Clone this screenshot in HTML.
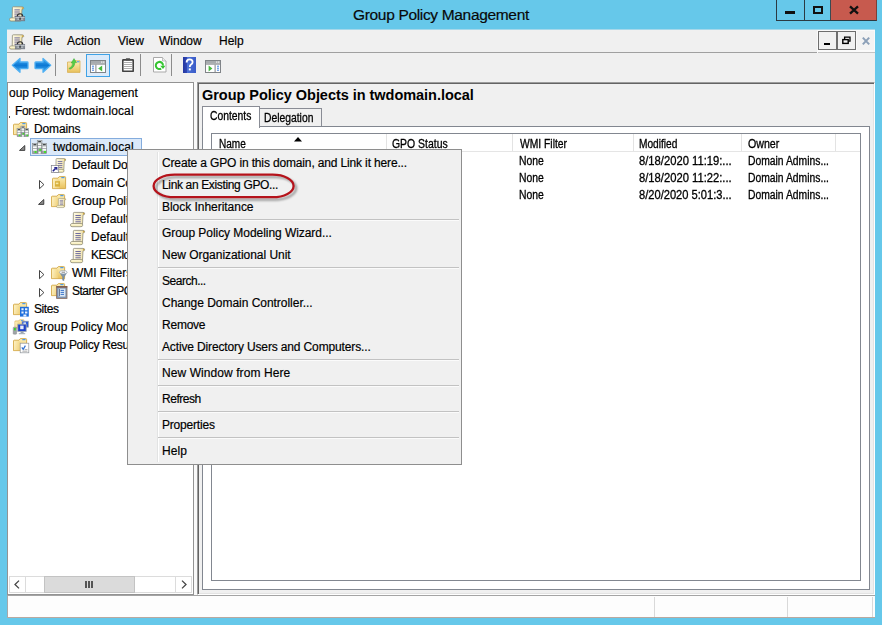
<!DOCTYPE html>
<html>
<head>
<meta charset="utf-8">
<title>Group Policy Management</title>
<style>
*{box-sizing:border-box;margin:0;padding:0}
html,body{width:882px;height:625px;overflow:hidden}
body{position:relative;background:#66c8ea;font-family:"Liberation Sans",sans-serif;font-size:12px;color:#000}
.abs{position:absolute}
.t{position:absolute;white-space:pre;line-height:1;-webkit-text-stroke:.18px #000}
svg{position:absolute;display:block;overflow:visible}
/* title */
#title{left:353px;top:6.5px;font-size:15.5px;letter-spacing:-0.33px;color:#0a0a0a}
/* caption buttons */
#cap{left:776px;top:0;width:101px;height:21px;background:#66c8ea;border-left:1px solid #2b3a42;border-bottom:1px solid #2b3a42;border-right:1px solid #7a4038}
#capclose{left:830px;top:0;width:46px;height:20px;background:#c75a4e}
/* client */
#client{left:7px;top:30px;width:868px;height:588px;background:#f0f0f0}
#menuline{left:7px;top:52px;width:810px;height:1px;background:#a0a0a0}
.menu{font-size:12px;top:35px}
/* tree */
#tree{left:7px;top:82px;width:187px;height:513px;background:#fff;border:1px solid #939393}
.tr{font-size:12px}
#sel{left:30px;top:138px;width:112px;height:18px;background:#dbe9f9;border:1px solid #84acdd}
/* right pane */
#rp{left:197px;top:82px;width:678px;height:513px;border:1px solid #fff;border-top-color:#9c9c9c;border-left-color:#9c9c9c;box-shadow:inset 1px 1px 0 #646464,inset -1px -1px 0 #e3e3e3;background:#f0f0f0}
#h1{left:202px;top:88px;font-size:14.5px;font-weight:bold;letter-spacing:-0.035px;-webkit-text-stroke:0}
#tabpage{left:202px;top:126px;width:668px;height:464px;background:#fff;border:1px solid #828790}
#tab1{left:202px;top:106px;width:58px;height:22px;background:#fff;border:1px solid #898c95;border-bottom:none}
#tab2{left:259px;top:108px;width:63px;height:18px;background:#f0f0f0;border:1px solid #898c95;border-bottom:none}
#lv{left:211px;top:133px;width:650px;height:448px;background:#fff;border:1px solid #828790}
.hd{font-size:12px;top:138px;-webkit-text-stroke:.3px #000}
.cell{font-size:12px;-webkit-text-stroke:.3px #000}
.hsep{top:134px;width:1px;height:17px;background:#e3e3e3}
/* status */
#status{left:7px;top:595px;width:868px;height:23px;background:#fdfdfd}

.tsep{top:54px;width:1px;height:22px;background:#8c8c8c}
/* context menu */
#cm{left:127px;top:149px;width:335px;height:316px;background:#f0f0f0;border:1px solid #8e8e8e}
.mi{font-size:12px;left:162px}
.ms{left:158px;width:301px;height:1px;background:#c2c2c2;box-shadow:0 1px 0 #fbfbfb}
</style>
</head>
<body>

<svg width="0" height="0" style="left:0;top:0">
<defs>
<linearGradient id="fg" x1="0" y1="0" x2="0" y2="1"><stop offset="0" stop-color="#fdf0b8"/><stop offset="1" stop-color="#e9c15c"/></linearGradient>
<linearGradient id="fg2" x1="0" y1="0" x2="1" y2="0"><stop offset="0" stop-color="#fff6cf"/><stop offset="1" stop-color="#f1d37d"/></linearGradient>
<linearGradient id="ag" x1="0" y1="0" x2="0" y2="1"><stop offset="0" stop-color="#49acf0"/><stop offset=".5" stop-color="#0c78d4"/><stop offset="1" stop-color="#4fb2f3"/></linearGradient>
<linearGradient id="sg" x1="0" y1="0" x2="1" y2="0"><stop offset="0" stop-color="#fffbe6"/><stop offset="1" stop-color="#f0e2a8"/></linearGradient>
<linearGradient id="hg" x1="0" y1="0" x2="1" y2="0"><stop offset="0" stop-color="#2536a0"/><stop offset=".3" stop-color="#2f47b4"/><stop offset=".32" stop-color="#4a6fd6"/><stop offset="1" stop-color="#3b5cc8"/></linearGradient>
<!-- folder 14x13 -->
<symbol id="folder" viewBox="0 0 16 16" overflow="visible">
 <path d="M0.5 3 Q0.5 2.2 1.3 2.2 H6 L7.3 0.6 H12.8 Q13.6 0.6 13.6 1.4 V12.6 H0.5 Z" fill="url(#fg)" stroke="#d3a744" stroke-width=".9"/>
 <path d="M0.9 3.4 H7.2 V12.2 H0.9 Z" fill="url(#fg2)" opacity=".75"/>
 <rect x="9.3" y="1.1" width="3.2" height="1.1" fill="#3d93ee"/>
</symbol>
<!-- scroll (GPO) 15x15 -->
<symbol id="scroll" viewBox="0 0 16 16" overflow="visible">
 <path d="M3.4 1.2 Q3.4 0.4 4.2 0.4 H13 Q14.9 0.4 14.7 2 Q14.5 3 13 2.8 L12.5 12 H3.2 Z" fill="url(#sg)" stroke="#8e8a76" stroke-width=".8"/>
 <path d="M12.8 0.8 Q14.6 0.6 14.3 2.1 Q13.7 2.7 12.9 2.4Z" fill="#d2a83f"/>
 <path d="M0.5 13.1 Q0.5 11.6 2 11.6 H11.6 Q12.9 11.8 12.7 13.3 Q12.5 14.7 11 14.7 H2 Q0.5 14.7 0.5 13.1Z" fill="#f7edb8" stroke="#8e8a76" stroke-width=".8"/>
 <path d="M1.2 12.7 H10.6" stroke="#fffbe0" stroke-width=".9"/>
 <path d="M5.4 3.5H10.8M5.4 5.6H10.8M5.4 7.7H10.8M5.4 9.8H10.8" stroke="#67639c" stroke-width=".95"/>
</symbol>
<!-- single server w=5 h variable drawn manually -->
<symbol id="servers" viewBox="0 0 16 16" overflow="visible">
 <g>
 <rect x="5.4" y="0.3" width="5.2" height="14.4" fill="#9da3a6" stroke="#70777a" stroke-width=".5"/>
 <rect x="5.7" y="0.6" width="4.6" height="2.4" fill="#c3c7c9"/>
 <rect x="6.5" y="1.2" width="3" height="1.1" fill="#2f3437"/>
 <rect x="6.0" y="3.5999999999999996" width="4" height="1.9" fill="#fafbfb"/>
 <rect x="6.0" y="6.3999999999999995" width="4" height="1.9" fill="#fafbfb"/>
 <rect x="7.7" y="9.7" width="2.1" height="2.1" fill="#3fe224"/>
 <rect x="0.3" y="3.6" width="5.2" height="11.1" fill="#9da3a6" stroke="#70777a" stroke-width=".5"/>
 <rect x="0.6" y="3.9" width="4.6" height="2.4" fill="#c3c7c9"/>
 <rect x="1.4000000000000001" y="4.5" width="3" height="1.1" fill="#2f3437"/>
 <rect x="0.8999999999999999" y="6.9" width="4" height="1.9" fill="#fafbfb"/>
 <rect x="0.8999999999999999" y="9.7" width="4" height="1.9" fill="#fafbfb"/>
 <rect x="2.6" y="11.9" width="2.1" height="2.1" fill="#3fe224"/>
 <rect x="10.5" y="3.6" width="5.2" height="11.1" fill="#9da3a6" stroke="#70777a" stroke-width=".5"/>
 <rect x="10.8" y="3.9" width="4.6" height="2.4" fill="#c3c7c9"/>
 <rect x="11.6" y="4.5" width="3" height="1.1" fill="#2f3437"/>
 <rect x="11.1" y="6.9" width="4" height="1.9" fill="#fafbfb"/>
 <rect x="11.1" y="9.7" width="4" height="1.9" fill="#fafbfb"/>
 <rect x="12.8" y="11.9" width="2.1" height="2.1" fill="#3fe224"/>
 <rect x="6.8" y="12.6" width="2.4" height="2.1" fill="#fafbfb"/>
 </g>
</symbol>
<symbol id="exp" viewBox="0 0 8 8" overflow="visible"><path d="M0.5 6.5 H6.5 V0.5 Z" fill="#595959" stroke="#262626" stroke-width=".6"/></symbol>
<symbol id="col" viewBox="0 0 8 10" overflow="visible"><path d="M0.6 0.8 V9.2 L5 5 Z" fill="#fff" stroke="#303030" stroke-width=".9"/></symbol>
</defs>
</svg>
<!-- title bar -->
<div class="t" id="title">Group Policy Management</div>
<div class="abs" id="cap"></div>
<div class="abs" id="capclose"></div>

<div class="abs" style="left:7px;top:29px;width:868px;height:1px;background:#a6d8ea"></div><div class="abs" id="client"></div>
<div class="abs" id="menuline"></div>
<!-- caption glyphs -->
<div class="abs" style="left:804px;top:0;width:1px;height:20px;background:#2b3a42"></div>
<div class="abs" style="left:830px;top:0;width:1px;height:20px;background:#3a4a52"></div>
<div class="abs" style="left:785px;top:11px;width:10px;height:3px;background:#111"></div>
<div class="abs" style="left:813px;top:6px;width:10px;height:8px;border:2px solid #111"></div>
<svg style="left:849px;top:6px" width="10" height="8" viewBox="0 0 10 8"><path d="M1 0.4 L9 7.6 M9 0.4 L1 7.6" stroke="#111" stroke-width="2.3"/></svg>
<!-- mdi buttons -->
<div class="abs" style="left:817px;top:30px;width:58px;height:23px;background:#fafafa"></div>
<div class="abs" style="left:818px;top:52px;width:57px;height:1px;background:#c4c4c4"></div>
<div class="abs" style="left:818px;top:31px;width:19px;height:19px;background:#f1f1f1;border:1px solid #6e6e6e"></div>
<div class="abs" style="left:837px;top:31px;width:19px;height:19px;background:#f1f1f1;border:1px solid #6e6e6e"></div>
<div class="abs" style="left:857px;top:31px;width:17px;height:19px;background:#f3f3f3"></div>
<div class="abs" style="left:824px;top:43px;width:6px;height:2px;background:#000"></div>
<svg style="left:842px;top:36px" width="9" height="9" viewBox="0 0 9 9"><path d="M2.6 3 V1.2 H8 V5.2 H6.4" fill="none" stroke="#000" stroke-width="1.3"/><rect x="0.8" y="3.6" width="5.4" height="3.8" fill="none" stroke="#000" stroke-width="1.4"/></svg>
<svg style="left:862px;top:37px" width="8" height="8" viewBox="0 0 8 8"><path d="M0.8 0.6 L7.2 7.4 M7.2 0.6 L0.8 7.4" stroke="#8ca0b8" stroke-width="2"/></svg>

<div class="t menu" id="m1" style="left:33px">File</div>
<div class="t menu" id="m2" style="left:67px">Action</div>
<div class="t menu" id="m3" style="left:118px">View</div>
<div class="t menu" id="m4" style="left:159px">Window</div>
<div class="t menu" id="m5" style="left:219px">Help</div>


<!-- title + menu icon -->
<svg style="left:9px;top:6px" width="16" height="16" viewBox="0 0 16 16"><use href="#scroll" x="0" y="0.4" width="16" height="16"/><path d="M8.2 10.6 Q8.4 7.8 11 7.8 Q13.6 7.8 13.8 10.6" fill="none" stroke="#2e2e2e" stroke-width="1.1"/><rect x="6.2" y="10.7" width="9.6" height="4.2" fill="#8b9299" stroke="#656b78" stroke-width=".5"/><rect x="6.4" y="11.1" width="9.2" height=".9" fill="#c4c9ce"/><rect x="10.5" y="11.6" width="1.1" height="2" fill="#1e1e1e"/><rect x="8.4" y="12.6" width="1.6" height="1.2" fill="#c4c9ce"/><rect x="12.2" y="12.6" width="1.6" height="1.2" fill="#c4c9ce"/></svg>
<svg style="left:9px;top:34px" width="16" height="16" viewBox="0 0 16 16"><use href="#scroll" x="0" y="0.4" width="16" height="16"/><path d="M8.2 10.6 Q8.4 7.8 11 7.8 Q13.6 7.8 13.8 10.6" fill="none" stroke="#2e2e2e" stroke-width="1.1"/><rect x="6.2" y="10.7" width="9.6" height="4.2" fill="#8b9299" stroke="#656b78" stroke-width=".5"/><rect x="6.4" y="11.1" width="9.2" height=".9" fill="#c4c9ce"/><rect x="10.5" y="11.6" width="1.1" height="2" fill="#1e1e1e"/><rect x="8.4" y="12.6" width="1.6" height="1.2" fill="#c4c9ce"/><rect x="12.2" y="12.6" width="1.6" height="1.2" fill="#c4c9ce"/></svg>

<!-- toolbar -->
<svg style="left:12px;top:58px" width="17" height="15" viewBox="0 0 17 15"><path d="M0.3 7.3 L8 0.4 V4 H15.2 Q16 4 16 4.8 V9.9 Q16 10.7 15.2 10.7 H8 V14.3 Z" fill="url(#ag)" stroke="#4fb0f3" stroke-width="1.3" stroke-linejoin="round"/></svg>
<svg style="left:34px;top:58px" width="17" height="15" viewBox="0 0 17 15"><path d="M16.7 7.3 L9 0.4 V4 H1.8 Q1 4 1 4.8 V9.9 Q1 10.7 1.8 10.7 H9 V14.3 Z" fill="url(#ag)" stroke="#4fb0f3" stroke-width="1.3" stroke-linejoin="round"/></svg>
<div class="abs tsep" style="left:55px"></div>
<svg style="left:67px;top:58px" width="15" height="15" viewBox="0 0 15 15"><path d="M0.5 4 H5.5 L6.8 2.8 H13 V14.4 H0.5 Z" fill="url(#fg)" stroke="#d8b055" stroke-width=".8"/><rect x="10" y="3.3" width="2.4" height="1" fill="#3d93ee"/><path d="M2 10.4 Q5.4 9.2 5.8 5 L4.2 5 L7 0.6 L9.6 4.6 L7.8 4.7 Q7.6 9.6 2.8 11.2 Z" fill="#56cf45" stroke="#3aa936" stroke-width=".5"/></svg>
<div class="abs" id="tsel" style="left:86px;top:54px;width:24px;height:23px;background:#dbeafa;border:1px solid #3fa2e6"></div>
<svg style="left:90px;top:60px" width="16" height="13" viewBox="0 0 16 13"><rect x="0.5" y="0.5" width="15" height="12" fill="#fff" stroke="#808488"/><rect x="1" y="1" width="14" height="2.6" fill="#a7abae"/><rect x="1" y="3.6" width="14" height="1" fill="#808488"/><rect x="11" y="1.4" width="1.4" height="1.4" fill="#e8e8e8"/><rect x="13" y="1.4" width="1.4" height="1.4" fill="#e8e8e8"/><rect x="5.4" y="4.6" width="1" height="7.6" fill="#808488"/><path d="M2 6.2H4M2 8.2H4M2 10.2H4" stroke="#3f7ede" stroke-width="1"/><path d="M12.2 5.6 V11.4 L8.2 8.5 Z" fill="#46b83c"/></svg>
<svg style="left:122px;top:58px" width="12" height="14" viewBox="0 0 12 14"><rect x="0.8" y="1.9" width="10.4" height="11.4" rx=".4" fill="#fff" stroke="#434343" stroke-width="1.6"/><rect x="3.8" y="0.3" width="4.4" height="2.2" rx=".6" fill="#4d4d4d"/><path d="M2.4 4.5H9.6M2.4 6.5H9.6M2.4 8.5H9.6M2.4 10.5H9.6" stroke="#9a9a9a" stroke-width=".8" shape-rendering="crispEdges"/></svg>
<div class="abs tsep" style="left:140px"></div>
<svg style="left:153px;top:57px" width="14" height="16" viewBox="0 0 14 16"><path d="M0.5 0.5 H9.5 L13 4 V15 H0.5 Z" fill="#fff" stroke="#a9a9a9"/><path d="M9.5 0.5 V4 H13" fill="#ececec" stroke="#a9a9a9" stroke-width=".7"/><path d="M10 8.6 A3.6 3.6 0 1 0 8.2 11.6" fill="none" stroke="#35c431" stroke-width="2"/><path d="M7.2 8.8 H12.4 L10 12 Z" fill="#35c431"/></svg>
<div class="abs tsep" style="left:171px"></div>
<svg style="left:183px;top:57px" width="13" height="16" viewBox="0 0 13 16"><rect x="0" y="0" width="13" height="16" fill="url(#hg)"/><path d="M3.6 5.4 Q3.6 2.4 6.6 2.4 Q9.6 2.4 9.6 5 Q9.6 6.6 8 7.6 Q6.8 8.4 6.8 10" fill="none" stroke="#fff" stroke-width="1.8"/><rect x="5.8" y="11.4" width="2" height="2" fill="#fff"/></svg>
<svg style="left:205px;top:60px" width="16" height="13" viewBox="0 0 16 13"><rect x="0.5" y="0.5" width="15" height="12" fill="#fff" stroke="#808488"/><rect x="1" y="1" width="14" height="2.6" fill="#a7abae"/><rect x="1" y="3.6" width="14" height="1" fill="#808488"/><rect x="11" y="1.4" width="1.4" height="1.4" fill="#e8e8e8"/><rect x="13" y="1.4" width="1.4" height="1.4" fill="#e8e8e8"/><rect x="9.6" y="4.6" width="1" height="7.6" fill="#808488"/><path d="M12 6.2H14M12 8.2H14M12 10.2H14" stroke="#3f7ede" stroke-width="1"/><path d="M3.6 5.6 V11.4 L7.4 8.5 Z" fill="#46b83c"/></svg>

<div class="abs" id="tree"></div>
<div class="abs" id="sel"></div>



<!-- tree icons -->
<svg style="left:13px;top:122px" width="16" height="16" viewBox="0 0 16 16"><use href="#folder" x="0" y="0" width="16" height="16"/><g transform="translate(3.8,3.8) scale(.76,.74)"><use href="#servers" width="16" height="16"/></g></svg>
<svg style="left:19px;top:145px" width="7" height="7" viewBox="0 0 7 7"><path d="M0.5 5.4 H5.8 V0.5 Z" fill="#8c8c8c" stroke="#262626" stroke-width=".8"/></svg>
<svg style="left:32px;top:140px" width="15" height="15"><use href="#servers" width="15.2" height="14.8"/></svg>
<svg style="left:51px;top:158px" width="16" height="16" viewBox="0 0 16 16"><g transform="translate(2.2,0.2) scale(.85,.96)"><use href="#scroll" width="16" height="16"/></g><rect x="0.3" y="7.6" width="7.4" height="6.9" fill="#fff" stroke="#7d7d86" stroke-width=".7"/><path d="M1.8 13.2 L4.6 10.4" stroke="#25258e" stroke-width="1.6"/><path d="M2.8 9 H6.4 V12.6 Z" fill="#25258e"/></svg>
<svg style="left:39px;top:180px" width="6" height="10" viewBox="0 0 6 10"><path d="M0.5 0.5 V8.7 L4.9 4.6 Z" fill="#fff" stroke="#2e2e2e" stroke-width=".9"/></svg>
<svg style="left:52px;top:176px" width="16" height="16" viewBox="0 0 16 16"><use href="#folder" width="16" height="16"/><rect x="3" y="5.2" width="5" height="5.4" fill="#d9b03c"/><rect x="3.8" y="6.6" width="2.6" height="1.6" fill="#f7e9a6"/></svg>
<svg style="left:38px;top:199px" width="7" height="7" viewBox="0 0 7 7"><path d="M0.5 5.4 H5.8 V0.5 Z" fill="#8c8c8c" stroke="#262626" stroke-width=".8"/></svg>
<svg style="left:51px;top:194px" width="16" height="16" viewBox="0 0 16 16"><use href="#folder" width="16" height="16"/><use href="#scroll" x="5" y="4.2" width="10.8" height="10.2"/></svg>
<svg style="left:70px;top:212px" width="16" height="16"><use href="#scroll" width="16" height="16"/></svg>
<svg style="left:70px;top:230px" width="16" height="16"><use href="#scroll" width="16" height="16"/></svg>
<svg style="left:70px;top:248px" width="16" height="16"><use href="#scroll" width="16" height="16"/></svg>
<svg style="left:39px;top:270px" width="6" height="10" viewBox="0 0 6 10"><path d="M0.5 0.5 V8.7 L4.9 4.6 Z" fill="#fff" stroke="#2e2e2e" stroke-width=".9"/></svg>
<svg style="left:51px;top:266px" width="17" height="16" viewBox="0 0 17 16"><use href="#folder" width="16" height="16"/><path d="M8.6 6.4 L11.6 11 V14.2 L13 14.6 V11 L16 6.4 Z" fill="#7f95ac" stroke="#5f7388" stroke-width=".4"/><ellipse cx="12.3" cy="6.2" rx="3.8" ry="1.7" fill="#fff" stroke="#8a98a8" stroke-width=".6"/><path d="M10.6 6.2 H14" stroke="#666" stroke-width=".8"/></svg>
<svg style="left:39px;top:288px" width="6" height="10" viewBox="0 0 6 10"><path d="M0.5 0.5 V8.7 L4.9 4.6 Z" fill="#fff" stroke="#2e2e2e" stroke-width=".9"/></svg>
<svg style="left:51px;top:283px" width="17" height="17" viewBox="0 0 17 17"><use href="#folder" width="16" height="16"/><rect x="5.6" y="3.4" width="10.4" height="12" fill="#7f93ae" stroke="#8a6c5e" stroke-width=".8"/><rect x="5.4" y="3" width="10.8" height="1.7" fill="#84604f"/><rect x="7.4" y="5.6" width="7" height="8" fill="#dbe9f7"/><path d="M9.6 7.4H13M9.6 9.4H13M9.6 11.4H13" stroke="#3d74c8" stroke-width="1"/><path d="M8.4 6 V13.2" stroke="#3a4a68" stroke-width=".8"/></svg>
<svg style="left:13px;top:302px" width="16" height="16" viewBox="0 0 16 16"><use href="#folder" width="16" height="16"/><rect x="7" y="4.8" width="8.8" height="9.8" fill="#1f6fdc"/><path d="M8.4 6.2h2.2v2h-2.2zM12 6.2h2.4v2H12zM8.4 9.4h2.2v2h-2.2zM12 9.4h2.4v2H12zM10.4 12.6h3v2h-3z" fill="#e8f1fd"/></svg>
<svg style="left:13px;top:319px" width="16" height="16" viewBox="0 0 16 16"><use href="#folder" x="1.6" y="0.4" width="11" height="11"/><rect x="9" y="2.2" width="6.4" height="6" fill="#2a59d8" stroke="#9aa3ad" stroke-width=".7"/><rect x="10.4" y="3.4" width="2.6" height="2.6" fill="#dfe8f6"/><rect x="4.8" y="5.2" width="8.4" height="7.2" fill="#1e40c8" stroke="#9aa3ad" stroke-width=".8"/><rect x="7.2" y="6.6" width="3.4" height="3.6" fill="#e6ecf8"/><rect x="7.6" y="12.6" width="3" height="1.6" fill="#9aa3ad"/><rect x="5.8" y="14.2" width="6.4" height="1" fill="#9aa3ad"/><rect x="0.2" y="8.2" width="3.4" height="7" rx=".6" fill="#9ea4a8" stroke="#777" stroke-width=".4"/><rect x="1" y="9" width="1.8" height="2.4" fill="#35d22c"/></svg>
<svg style="left:13px;top:338px" width="16" height="16" viewBox="0 0 16 16"><use href="#folder" width="16" height="16"/><rect x="7.2" y="5.2" width="8.6" height="9.6" fill="#fff" stroke="#8f949a" stroke-width=".7"/><path d="M8.8 9.4 L10.2 11.4 L12.4 7.6" fill="none" stroke="#2f6fd0" stroke-width="1.2"/><path d="M11.6 11.6H14.4M9.4 13.2H14.4" stroke="#8d8d8d" stroke-width=".7"/></svg>
<!-- tree text -->
<div class="t tr" id="t1" style="left:9px;top:87px">oup Policy Management</div>
<div class="t tr" id="t2" style="left:15px;top:105px;letter-spacing:0.1px"><span style="letter-spacing:-0.35px">Forest: </span>twdomain.local</div><div class="abs" style="left:9px;top:116px;width:1px;height:2px;background:#555"></div>
<div class="t tr" id="t3" style="letter-spacing:-0.15px;left:34px;top:123px">Domains</div>
<div class="t tr" id="t4" style="letter-spacing:0.10px;left:53px;top:141px">twdomain.local</div>
<div class="t tr" id="t5" style="letter-spacing:-0.10px;left:72px;top:159px">Default Do</div>
<div class="t tr" id="t6" style="left:72px;top:177px">Domain Co</div>
<div class="t tr" id="t7" style="left:72px;top:195px">Group Poli</div>
<div class="t tr" id="t8" style="left:91px;top:213px">Default</div>
<div class="t tr" id="t9" style="left:91px;top:231px">Default</div>
<div class="t tr" id="t10" style="letter-spacing:-0.55px;left:91px;top:249px">KESClo</div>
<div class="t tr" id="t11" style="letter-spacing:-0.05px;left:72px;top:267px">WMI Filters</div>
<div class="t tr" id="t12" style="letter-spacing:-0.50px;left:72px;top:285px">Starter GPO</div>
<div class="t tr" id="t13" style="left:34px;top:303px;letter-spacing:-0.45px">Sites</div>
<div class="t tr" id="t14" style="left:34px;top:321px">Group Policy Mod</div>
<div class="t tr" id="t15" style="left:34px;top:339px;letter-spacing:-0.3px">Group Policy Resul</div>


<!-- tree h-scrollbar -->
<div class="abs" id="hsb" style="left:9px;top:576px;width:183px;height:17px;background:#fff;border:1px solid #dcdcdc"></div>
<div class="abs" style="left:25px;top:577px;width:1px;height:15px;background:#dcdcdc"></div>
<div class="abs" style="left:175px;top:577px;width:1px;height:15px;background:#dcdcdc"></div>
<div class="abs" id="thumb" style="left:44px;top:576px;width:91px;height:17px;background:#dbdbdb;border:1px solid #c3c3c3"></div>
<svg style="left:14px;top:580px" width="6" height="9" viewBox="0 0 6 9"><path d="M5 0.6 L1 4.5 L5 8.4" fill="none" stroke="#444" stroke-width="1.3"/></svg>
<svg style="left:181px;top:580px" width="6" height="9" viewBox="0 0 6 9"><path d="M1 0.6 L5 4.5 L1 8.4" fill="none" stroke="#444" stroke-width="1.3"/></svg>
<div class="abs" style="left:85px;top:581px;width:2px;height:7px;background:#555"></div>
<div class="abs" style="left:88px;top:581px;width:2px;height:7px;background:#555"></div>
<div class="abs" style="left:91px;top:581px;width:2px;height:7px;background:#555"></div>
<div class="abs" style="left:194px;top:82px;width:3px;height:513px;background:#f9f9f9"></div><div class="abs" id="rp"></div>
<div class="t" id="h1">Group Policy Objects in twdomain.local</div>
<div class="abs" id="tabpage"></div>
<div class="abs" id="tab2"></div>
<div class="abs" id="tab1"></div>
<div class="abs" id="lv"></div>


<!-- tabs text -->
<div class="t" id="tb1" style="-webkit-text-stroke:.3px #000;left:210px;top:110px;font-size:12px;transform-origin:0 0;transform:scaleX(0.8599)">Contents</div>
<div class="t" id="tb2" style="-webkit-text-stroke:.3px #000;left:264px;top:112px;font-size:12px;transform-origin:0 0;transform:scaleX(0.8610)">Delegation</div>
<!-- list header -->
<div class="abs" id="hdline" style="left:212px;top:151px;width:648px;height:1px;background:#e5e5e5"></div>
<div class="abs hsep" style="left:386px"></div>
<div class="abs hsep" style="left:512px"></div>
<div class="abs hsep" style="left:633px"></div>
<div class="abs hsep" style="left:741px"></div>
<div class="abs hsep" style="left:835px"></div>
<div class="t hd" id="hd1" style="left:219px;font-size:12px;transform-origin:0 0;transform:scaleX(0.8371)">Name</div>
<div class="t hd" id="hd2" style="left:392px;font-size:12px;transform-origin:0 0;transform:scaleX(0.8699)">GPO Status</div>
<div class="t hd" id="hd3" style="left:520px;font-size:12px;transform-origin:0 0;transform:scaleX(0.8599)">WMI Filter</div>
<div class="t hd" id="hd4" style="left:639px;font-size:12px;transform-origin:0 0;transform:scaleX(0.8466)">Modified</div>
<div class="t hd" id="hd5" style="left:748px;font-size:12px;transform-origin:0 0;transform:scaleX(0.8856)">Owner</div>
<svg style="left:294px;top:137px" width="9" height="5"><path d="M0 4.5 L4 0 L8 4.5 Z" fill="#000"/></svg>
<!-- rows -->
<div class="t cell" id="c11" style="left:519px;top:155px;font-size:12px;transform-origin:0 0;transform:scaleX(0.8645)">None</div>
<div class="t cell" id="c12" style="left:639px;top:155px;font-size:12px;transform-origin:0 0;transform:scaleX(0.9344)">8/18/2020 11:19:...</div>
<div class="t cell" id="c13" style="left:748px;top:155px;font-size:12px;transform-origin:0 0;transform:scaleX(0.8613)">Domain Admins...</div>
<div class="t cell" id="c21" style="left:519px;top:172px;font-size:12px;transform-origin:0 0;transform:scaleX(0.8645)">None</div>
<div class="t cell" id="c22" style="left:639px;top:172px;font-size:12px;transform-origin:0 0;transform:scaleX(0.9344)">8/18/2020 11:22:...</div>
<div class="t cell" id="c23" style="left:748px;top:172px;font-size:12px;transform-origin:0 0;transform:scaleX(0.8613)">Domain Admins...</div>
<div class="t cell" id="c31" style="left:519px;top:189px;font-size:12px;transform-origin:0 0;transform:scaleX(0.8645)">None</div>
<div class="t cell" id="c32" style="left:639px;top:189px;font-size:12px;transform-origin:0 0;transform:scaleX(0.9261)">8/20/2020 5:01:3...</div>
<div class="t cell" id="c33" style="left:748px;top:189px;font-size:12px;transform-origin:0 0;transform:scaleX(0.8613)">Domain Admins...</div>

<div class="abs" id="status"></div><div class="abs" style="left:7px;top:595px;width:868px;height:1px;background:#a4a4a4"></div>
<div class="abs" style="left:7px;top:596px;width:1px;height:21px;background:#a8a8a8"></div>
<div class="abs" style="left:7px;top:617px;width:868px;height:1px;background:#b9a9a0"></div>
<div class="abs" style="left:654px;top:597px;width:1px;height:20px;background:#d9d9d9"></div>
<div class="abs" style="left:787px;top:597px;width:1px;height:20px;background:#d9d9d9"></div>
<div class="abs" style="left:872px;top:597px;width:1px;height:20px;background:#d9d9d9"></div>


<div class="abs" id="cm"></div>
<!-- context menu items -->
<div class="abs" id="gut" style="left:157px;top:152px;width:2px;height:310px;border-left:1px solid #e2e3e3;border-right:1px solid #fff"></div>
<div class="t mi" id="mi1" style="letter-spacing:-0.149px;top:157px">Create a GPO in this domain, and Link it here...</div>
<div class="t mi" id="mi2" style="letter-spacing:-0.351px;top:179px">Link an Existing GPO...</div>
<div class="t mi" id="mi3" style="letter-spacing:-0.033px;top:201px">Block Inheritance</div>
<div class="abs ms" style="top:219px"></div>
<div class="t mi" id="mi4" style="letter-spacing:-0.052px;top:227px">Group Policy Modeling Wizard...</div>
<div class="t mi" id="mi5" style="letter-spacing:-0.035px;top:249px">New Organizational Unit</div>
<div class="abs ms" style="top:267px"></div>
<div class="t mi" id="mi6" style="letter-spacing:-0.481px;top:275px">Search...</div>
<div class="t mi" id="mi7" style="letter-spacing:-0.030px;top:297px">Change Domain Controller...</div>
<div class="t mi" id="mi8" style="letter-spacing:-0.231px;top:319px">Remove</div>
<div class="t mi" id="mi9" style="letter-spacing:-0.140px;top:341px">Active Directory Users and Computers...</div>
<div class="abs ms" style="top:359px"></div>
<div class="t mi" id="mi10" style="letter-spacing:0.075px;top:367px">New Window from Here</div>
<div class="abs ms" style="top:385px"></div>
<div class="t mi" id="mi11" style="letter-spacing:-0.462px;top:393px">Refresh</div>
<div class="abs ms" style="top:411px"></div>
<div class="t mi" id="mi12" style="letter-spacing:-0.200px;top:419px">Properties</div>
<div class="abs ms" style="top:437px"></div>
<div class="t mi" id="mi13" style="letter-spacing:0.078px;top:445px">Help</div>


<!-- red oval -->
<svg style="left:148px;top:169px" width="156" height="38" viewBox="0 0 156 38"><defs><filter id="bl" x="-10%" y="-40%" width="120%" height="180%"><feGaussianBlur stdDeviation="1.1"/></filter></defs><rect x="8" y="8" width="140" height="22.6" rx="21" ry="11.3" fill="none" stroke="#000" stroke-opacity=".38" stroke-width="2.2" filter="url(#bl)"/><rect x="5.6" y="5.6" width="140" height="22.6" rx="21" ry="11.3" fill="none" stroke="#b5131b" stroke-width="2.3"/></svg>
</body>
</html>
